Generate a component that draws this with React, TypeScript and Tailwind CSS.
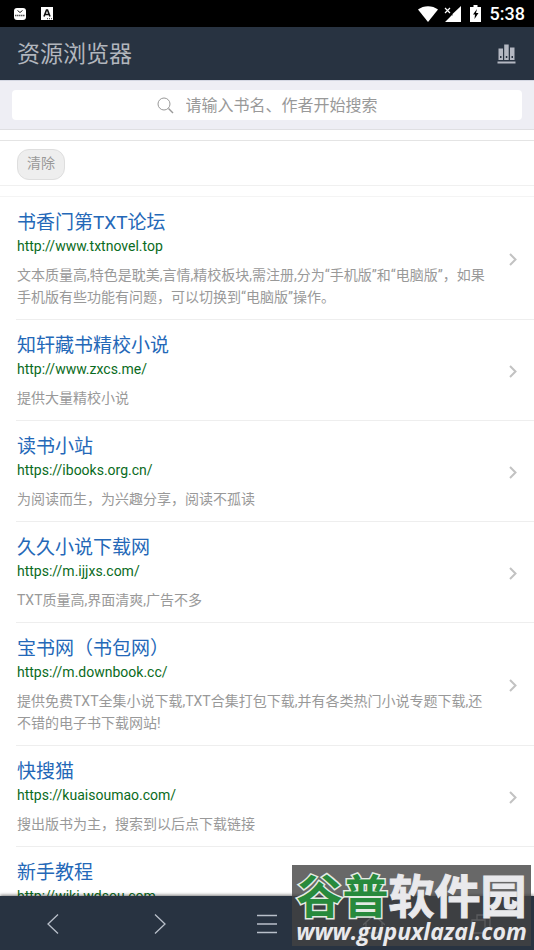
type Site = { title: string; url: string; description?: string };

const sites: Site[] = [
  {
    title: '书香门第TXT论坛',
    url: 'http://www.txtnovel.top',
    description:
      '文本质量高,特色是耽美,言情,精校板块,需注册,分为“手机版”和“电脑版”，如果手机版有些功能有问题，可以切换到“电脑版”操作。',
  },
  { title: '知轩藏书精校小说', url: 'http://www.zxcs.me/', description: '提供大量精校小说' },
  { title: '读书小站', url: 'https://ibooks.org.cn/', description: '为阅读而生，为兴趣分享，阅读不孤读' },
  { title: '久久小说下载网', url: 'https://m.ijjxs.com/', description: 'TXT质量高,界面清爽,广告不多' },
  {
    title: '宝书网（书包网）',
    url: 'https://m.downbook.cc/',
    description: '提供免费TXT全集小说下载,TXT合集打包下载,并有各类热门小说专题下载,还不错的电子书下载网站!',
  },
  { title: '快搜猫', url: 'https://kuaisoumao.com/', description: '搜出版书为主，搜索到以后点下载链接' },
  { title: '新手教程', url: 'http://wiki.wdsou.com' },
];

function StatusBar() {
  return (
    <div className="flex h-[27px] shrink-0 items-center bg-black pr-[9px] pl-[14px] text-white">
      <svg width="12" height="12" viewBox="0 0 12 12" aria-hidden="true">
        <rect width="12" height="12" rx="3" fill="#fff" />
        <path d="M3.500 2.500 6 4.500l2.500-2" fill="none" stroke="#222" strokeWidth="1" />
        <path d="M1 7.500h10" stroke="#555" strokeWidth="1.500" strokeDasharray="1.500 .5" />
      </svg>
      <svg className="ml-[15px]" width="12" height="13" viewBox="0 0 12 13" aria-hidden="true">
        <rect width="12" height="13" fill="#fff" />
        <path d="M3 9.500 5.500 3h1L9 9.500M4 7.500h4" fill="none" stroke="#111" strokeWidth="1.600" />
        <path d="M6 11.700h5" stroke="#333" strokeWidth="1" strokeDasharray="1 1" />
      </svg>
      <svg className="ml-auto" width="20" height="16" viewBox="0 0 20 16" aria-hidden="true">
        <path d="M0 3.500C5.500-1 14.500-1 20 3.500L10 16z" fill="#fff" />
      </svg>
      <svg className="ml-[6px]" width="17" height="16" viewBox="0 0 17 16" aria-hidden="true">
        <path d="M17 0v16H1l6-6V9.500h1.500V8z" fill="#fff" />
        <path d="m1 2 5 5M6 2 1 7" stroke="#fff" strokeWidth="1.200" />
      </svg>
      <svg className="ml-[9px]" width="11" height="17" viewBox="0 0 11 17" aria-hidden="true">
        <path d="M3.500 0h4v2H11v15H0V2h3.500z" fill="#fff" />
        <path d="M7 4 3 9.500h2L4.500 14 8.500 8H6z" fill="#000" />
      </svg>
      <span className="ml-[9px] text-[18px] leading-[27px] font-medium">5:38</span>
    </div>
  );
}

function Header() {
  return (
    <header className="flex h-[53px] shrink-0 items-center justify-between bg-[#283341] pr-[18px] pl-[17px]">
      <h1 className="pt-[3px] text-[23px] leading-[32px] text-[#b2b6bd]">资源浏览器</h1>
      <button type="button" aria-label="书架">
        <svg width="19" height="20" viewBox="0 0 19 20" fill="#b4b8c2">
          <path fillRule="evenodd" d="M1.500 4.500h4.500v11.500h-4.500zM3 12v2h1.500v-2z" />
          <path fillRule="evenodd" d="M7.200.500h4.500V16h-4.500zM8.800 12v2h1.500v-2z" />
          <path fillRule="evenodd" d="M13 3.500h4.500V16h-4.500zM14.500 12v2H16v-2z" />
          <path d="M.5 17.500h18v2H.5z" />
        </svg>
      </button>
    </header>
  );
}

function SearchBar() {
  return (
    <div className="shrink-0 border-t border-b border-t-[#d4d7e2] border-b-[#dfdfe2] bg-[#eeeef4] px-3 py-[9px]">
      <label className="flex h-[30px] items-center justify-center gap-3 rounded-[4px] bg-white">
        <svg width="17" height="17" viewBox="0 0 17 17" fill="none" stroke="#999" strokeWidth="1" aria-hidden="true">
          <circle cx="7" cy="7" r="6" />
          <path d="m11.500 11.500 4.500 4.500" strokeWidth="1.400" />
        </svg>
        <input
          type="text"
          aria-label="搜索"
          placeholder="请输入书名、作者开始搜索"
          className="w-[192px] bg-transparent pt-px text-[16px] leading-[24px] outline-none placeholder:text-[#999]"
        />
      </label>
    </div>
  );
}

function SiteRow({ site }: { site: Site }) {
  return (
    <li className="ml-4 flex items-center border-b border-[#eeeeee] pt-[13px] pr-[17px] pb-[11px] pl-px">
      <div className="flex-1 pr-[16px]">
        <a href={site.url} className="block">
          <span className="block text-[19px] leading-[26px] text-[#2468b8]">{site.title}</span>
          <span className="block text-[14px] leading-[20px] text-[#0a6b22]">{site.url}</span>
        </a>
        {site.description && (
          <p className="mt-2 text-[14px] leading-[22px] text-[#999]">{site.description}</p>
        )}
      </div>
      {site.description && (
        <svg width="8" height="13" viewBox="0 0 8 13" fill="none" stroke="#c2c2c2" strokeWidth="2" aria-hidden="true">
          <path d="m1 1 5.500 5.500L1 12" />
        </svg>
      )}
    </li>
  );
}

function BottomNav() {
  const button = 'flex items-center justify-center pt-[1px]';
  return (
    <nav className="z-10 grid h-[54px] shrink-0 grid-cols-5 bg-[#283341] text-[#b9c0ca] shadow-[0_-1px_3px_rgba(0,0,0,0.5)]">
      <button type="button" aria-label="后退" className={button}>
        <svg width="12" height="20" viewBox="0 0 12 20" fill="none" stroke="currentColor" strokeWidth="1.300">
          <path d="M11 .5 1 10l10 9.500" />
        </svg>
      </button>
      <button type="button" aria-label="前进" className={button}>
        <svg width="12" height="20" viewBox="0 0 12 20" fill="none" stroke="currentColor" strokeWidth="1.300">
          <path d="m1 .5 10 9.500L1 19.500" />
        </svg>
      </button>
      <button type="button" aria-label="菜单" className={button}>
        <svg width="20" height="20" viewBox="0 0 20 20" fill="none" stroke="currentColor" strokeWidth="1.500">
          <path d="M0 1.500h20M0 10h20M0 18.500h20" />
        </svg>
      </button>
      <button type="button" aria-label="主页" className={button}>
        <svg width="22" height="20" viewBox="0 0 22 20" fill="none" stroke="currentColor" strokeWidth="1.300">
          <path d="M0 11 11 1l11 10M3 9v10h16V9" />
        </svg>
      </button>
      <button type="button" aria-label="窗口" className={button}>
        <svg width="20" height="20" viewBox="0 0 20 20" fill="none" stroke="currentColor" strokeWidth="1.300">
          <path d="M1 6h13v13H1zM6 6V1h13v13h-5" />
        </svg>
      </button>
    </nav>
  );
}

function Watermark() {
  return (
    <div className="absolute right-[3px] bottom-[4px] z-20 flex h-[81px] w-[239px] flex-col items-center bg-[#424242]/80 pt-[9px] whitespace-nowrap">
      <div className="text-[46px] leading-[46px] font-bold text-[#e9e9ec]">
        <span className="text-[#278a3c] [-webkit-text-stroke:3px_#e4ece4] [paint-order:stroke_fill]">谷普</span>
        <span className="[-webkit-text-stroke:1px_#e9e9ec]">软件园</span>
      </div>
      <div className="font-['Open_Sans','Noto_Sans',sans-serif] text-[23px] leading-[22px] font-bold text-[#e9e9ec] italic">
        www.gupuxlazal.com
      </div>
    </div>
  );
}

export default function App() {
  return (
    <div className="relative flex h-dvh flex-col overflow-hidden bg-white font-[Roboto,'Noto_Sans_CJK_SC',sans-serif]">
      <StatusBar />
      <Header />
      <SearchBar />
      <main className="min-h-0 flex-1 overflow-hidden">
        <div className="mt-[10px] border-t border-b border-t-[#e4e4e4] border-b-[#f0f0f0] px-[17px] pt-2 pb-[5px]">
          <button
            type="button"
            className="block rounded-[12px] border border-[#dedede] bg-[#eeeeee] px-[9px] pt-[2px] pb-[5px] text-[14px] leading-[22px] text-[#999]"
          >
            清除
          </button>
        </div>
        <ul className="mt-[10px] border-t border-[#f4f4f4]">
          {sites.map((site) => (
            <SiteRow key={site.url} site={site} />
          ))}
        </ul>
      </main>
      <BottomNav />
      <Watermark />
    </div>
  );
}
